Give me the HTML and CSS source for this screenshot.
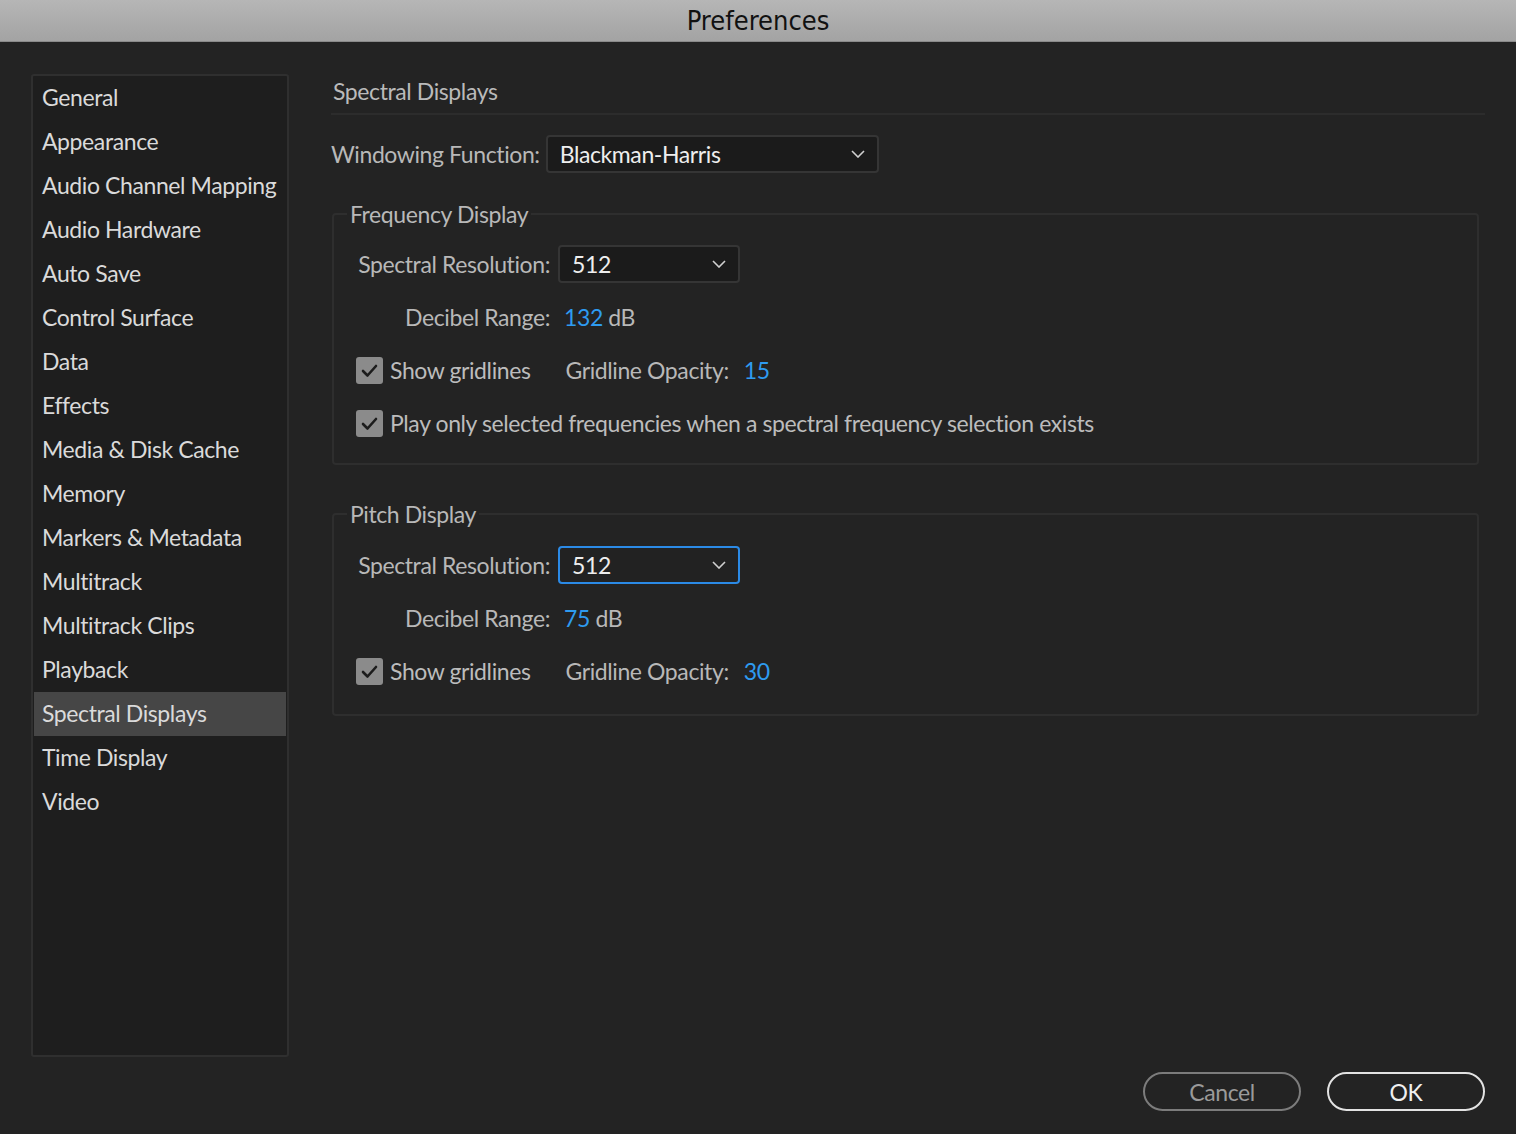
FILE: index.html
```html
<!DOCTYPE html>
<html>
<head>
<meta charset="utf-8">
<title>Preferences</title>
<link rel="stylesheet" href="styles.css">
</head>
<body>
<div class="window">
  <div class="titlebar">Preferences</div>
  <div class="body">
    <ul class="sidebar">
      <li class="nav-item">General</li>
      <li class="nav-item">Appearance</li>
      <li class="nav-item">Audio Channel Mapping</li>
      <li class="nav-item">Audio Hardware</li>
      <li class="nav-item">Auto Save</li>
      <li class="nav-item">Control Surface</li>
      <li class="nav-item">Data</li>
      <li class="nav-item">Effects</li>
      <li class="nav-item">Media &amp; Disk Cache</li>
      <li class="nav-item">Memory</li>
      <li class="nav-item">Markers &amp; Metadata</li>
      <li class="nav-item">Multitrack</li>
      <li class="nav-item">Multitrack Clips</li>
      <li class="nav-item">Playback</li>
      <li class="nav-item selected">Spectral Displays</li>
      <li class="nav-item">Time Display</li>
      <li class="nav-item">Video</li>
    </ul>
    <div class="main">
      <div class="panel">
        <div class="heading">Spectral Displays</div>
        <div class="window-row">
          <span class="label">Windowing Function:</span>
          <div class="select wide">
            <span class="select-value">Blackman-Harris</span>
            <svg class="chevron" width="14" height="8" viewBox="0 0 14 8"><path d="M1 1 L7 7 L13 1" fill="none" stroke="#d0d0d0" stroke-width="1.6"/></svg>
          </div>
        </div>

        <fieldset class="group">
          <legend class="legend">Frequency Display</legend>
          <div class="row">
            <span class="label right">Spectral Resolution:</span>
            <div class="select narrow">
              <span class="select-value">512</span>
              <svg class="chevron" width="14" height="8" viewBox="0 0 14 8"><path d="M1 1 L7 7 L13 1" fill="none" stroke="#d0d0d0" stroke-width="1.6"/></svg>
            </div>
          </div>
          <div class="row">
            <span class="label right">Decibel Range:</span>
            <span class="value"><span class="num">132</span> dB</span>
          </div>
          <div class="row">
            <span class="checkbox"><svg width="27" height="27" viewBox="0 0 27 27"><path d="M7 14 L11.5 18.5 L20 9" fill="none" stroke="#1c1c1c" stroke-width="2.6" stroke-linecap="round" stroke-linejoin="round"/></svg></span>
            <span class="check-label">Show gridlines</span>
            <span class="label opacity-label">Gridline Opacity:</span>
            <span class="num opacity-num">15</span>
          </div>
          <div class="row">
            <span class="checkbox"><svg width="27" height="27" viewBox="0 0 27 27"><path d="M7 14 L11.5 18.5 L20 9" fill="none" stroke="#1c1c1c" stroke-width="2.6" stroke-linecap="round" stroke-linejoin="round"/></svg></span>
            <span class="check-label">Play only selected frequencies when a spectral frequency selection exists</span>
          </div>
        </fieldset>

        <fieldset class="group pitch">
          <legend class="legend">Pitch Display</legend>
          <div class="row">
            <span class="label right">Spectral Resolution:</span>
            <div class="select narrow focused">
              <span class="select-value">512</span>
              <svg class="chevron" width="14" height="8" viewBox="0 0 14 8"><path d="M1 1 L7 7 L13 1" fill="none" stroke="#d0d0d0" stroke-width="1.6"/></svg>
            </div>
          </div>
          <div class="row">
            <span class="label right">Decibel Range:</span>
            <span class="value"><span class="num">75</span> dB</span>
          </div>
          <div class="row">
            <span class="checkbox"><svg width="27" height="27" viewBox="0 0 27 27"><path d="M7 14 L11.5 18.5 L20 9" fill="none" stroke="#1c1c1c" stroke-width="2.6" stroke-linecap="round" stroke-linejoin="round"/></svg></span>
            <span class="check-label">Show gridlines</span>
            <span class="label opacity-label">Gridline Opacity:</span>
            <span class="num opacity-num">30</span>
          </div>
        </fieldset>
      </div>
      <div class="buttons">
        <button class="btn cancel">Cancel</button>
        <button class="btn ok">OK</button>
      </div>
    </div>
  </div>
</div>
</body>
</html>
```

FILE: styles.css
```css
* { box-sizing: border-box; }
html, body {
  margin: 0;
  padding: 0;
  background: #232323;
}
body {
  font-family: Lato, "Open Sans", sans-serif;
  letter-spacing: -0.4px;
  width: 1516px;
  height: 1134px;
  overflow: hidden;
}
.window {
  display: flex;
  flex-direction: column;
  height: 1134px;
}
.titlebar {
  height: 42px;
  flex: none;
  background: linear-gradient(#b6b6b6, #a3a3a3);
  border-bottom: 1px solid #8a8a8a;
  color: #111;
  font-family: "DejaVu Sans", sans-serif;
  font-stretch: condensed;
  letter-spacing: 0;
  font-size: 27px;
  line-height: 41px;
  text-align: center;
}
.body {
  flex: 1;
  display: flex;
  padding: 32px 31px 23px 31px;
  gap: 42px;
}
.sidebar {
  list-style: none;
  margin: 0;
  padding: 0 1px;
  width: 258px;
  height: 983px;
  flex: none;
  background: #1e1e1e;
  border: 2px solid #2f2f2f;
  border-radius: 3px;
}
.nav-item {
  height: 44px;
  line-height: 42px;
  padding-left: 8px;
  color: #dadada;
  font-size: 23px;
  white-space: nowrap;
}
.nav-item.selected {
  background: #464646;
}
.main {
  flex: 1;
  display: flex;
  flex-direction: column;
  justify-content: space-between;
}
.panel {
  display: flex;
  flex-direction: column;
}
.heading {
  height: 41px;
  padding-left: 2px;
  line-height: 34px;
  color: #bababa;
  font-size: 23px;
  border-bottom: 2px solid #2c2c2c;
}
.window-row {
  display: flex;
  align-items: center;
  margin-top: 20px;
  gap: 6px;
}
.label {
  color: #b8b8b8;
  font-size: 23px;
  white-space: nowrap;
}
.select {
  display: flex;
  align-items: center;
  justify-content: space-between;
  height: 38px;
  background: #1b1b1b;
  border: 2px solid #353535;
  border-radius: 4px;
  padding: 0 12px 0 12px;
}
.select.wide { width: 333px; }
.select.narrow { width: 182px; }
.select.focused {
  border-color: #2b8ae6;
  background: #222;
}
.select-value {
  color: #eeeeee;
  font-size: 23px;
}
.chevron { display: block; }
.group {
  margin: 27px 6px 0 1px;
  padding: 17px 0 21px 22px;
  border: 2px solid #2e2e2e;
  border-radius: 4px;
  display: flex;
  flex-direction: column;
  gap: 15px;
}
.group.pitch {
  margin-top: 35px;
  padding-top: 18px;
  padding-bottom: 24px;
}
.legend {
  margin-left: -9px;
  padding: 0 3px;
  color: #b8b8b8;
  font-size: 23px;
  line-height: 28px;
}
.row {
  display: flex;
  align-items: center;
  height: 38px;
}
.label.right {
  width: 194px;
  text-align: right;
  margin-right: 8px;
}
.value {
  color: #b8b8b8;
  font-size: 23px;
  margin-left: 6px;
}
.num {
  color: #2e9bf0;
  font-size: 23px;
}
.checkbox {
  width: 27px;
  height: 27px;
  background: #8b8b8b;
  border-radius: 3px;
  flex: none;
}
.checkbox svg { display: block; }
.check-label {
  color: #bcbcbc;
  font-size: 23px;
  margin-left: 7px;
  white-space: nowrap;
}
.opacity-label {
  margin-left: 35px;
}
.opacity-num {
  margin-left: 15px;
}
.buttons {
  display: flex;
  justify-content: flex-end;
  gap: 26px;
}
.btn {
  width: 158px;
  height: 39px;
  border-radius: 20px;
  background: transparent;
  font-family: Lato, "Open Sans", sans-serif;
  letter-spacing: -0.4px;
  font-size: 23px;
  padding: 0;
}
.btn.cancel {
  border: 2px solid #7c7c7c;
  color: #9a9a9a;
}
.btn.ok {
  border: 2px solid #e2e2e2;
  color: #f0f0f0;
}
```
